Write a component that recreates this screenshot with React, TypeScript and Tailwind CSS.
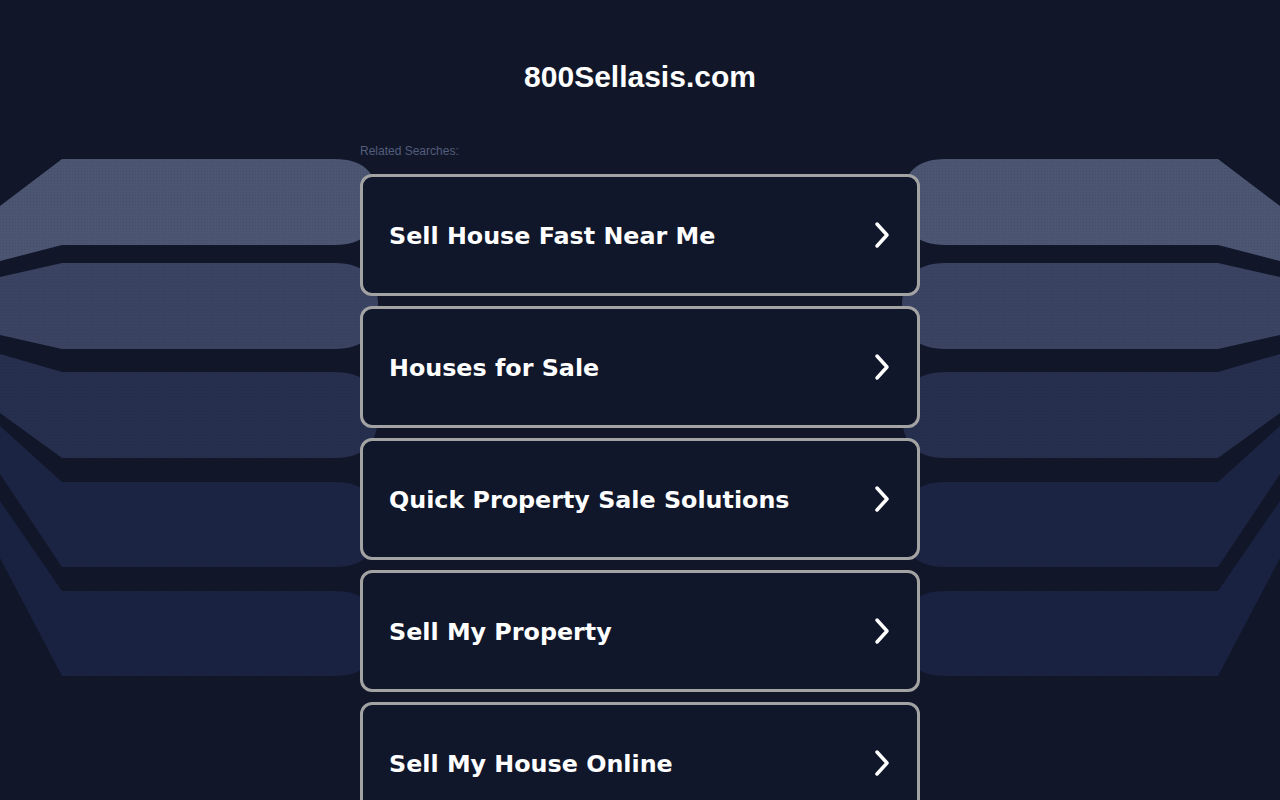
import React from 'react';

const SEARCHES = [
  'Sell House Fast Near Me',
  'Houses for Sale',
  'Quick Property Sale Solutions',
  'Sell My Property',
  'Sell My House Online',
];

// stacked ribbons on each side: top, bottom, left-edge top, left-edge bottom, fill
const RIBBONS = [
  { t: 159, b: 245, lt: 206, lb: 261, fill: '#4c5673' },
  { t: 263, b: 349, lt: 277, lb: 335, fill: '#3a4362' },
  { t: 372, b: 458, lt: 354, lb: 413, fill: '#262f4e' },
  { t: 482, b: 567, lt: 426, lb: 474, fill: '#1c2444' },
  { t: 591, b: 676, lt: 501, lb: 558, fill: '#1a2242' },
];

const ribbonPath = (r: (typeof RIBBONS)[number]) => {
  const mid = (r.t + r.b) / 2;
  return `M0,${r.lt} L62,${r.t} L335,${r.t} Q378,${r.t} 378,${mid} Q378,${r.b} 335,${r.b} L62,${r.b} L0,${r.lb} Z`;
};

const Backdrop = () => (
  <svg className="absolute inset-0 w-full h-full" viewBox="0 0 1280 800" preserveAspectRatio="none">
    <defs>
      <pattern id="dots" width="3" height="3" patternUnits="userSpaceOnUse">
        <rect width="1" height="1" fill="#0d1222" opacity="0.12" />
      </pattern>
    </defs>
    {RIBBONS.map((r, i) => (
      <g key={i}>
        <path d={ribbonPath(r)} fill={r.fill} />
        <path d={ribbonPath(r)} fill={r.fill} transform="translate(1280,0) scale(-1,1)" />
      </g>
    ))}
    <rect width="1280" height="800" fill="url(#dots)" />
  </svg>
);

const Chevron = () => (
  <svg width="18" height="30" viewBox="0 0 18 30" fill="none" className="-mt-[4px]">
    <path d="M4 4 L14 15 L4 26" stroke="#fff" strokeWidth="3.5" strokeLinecap="round" strokeLinejoin="round" />
  </svg>
);

export default function App() {
  return (
    <div className="relative min-h-screen h-[800px] overflow-hidden bg-[#111729]">
      <Backdrop />
      <div className="relative w-[560px] mx-auto">
        <h1
          className="mt-[60px] h-[34px] leading-[34px] text-center text-[30px] font-bold text-white"
          style={{ fontFamily: '"Liberation Sans", Arial, sans-serif' }}
        >
          800Sellasis.com
        </h1>
        <p
          className="mt-[50px] leading-[14px] text-[12px] text-[#535d7c]"
          style={{ fontFamily: '"Liberation Sans", Arial, sans-serif' }}
        >
          Related Searches:
        </p>
        <div className="mt-[16px] flex flex-col gap-[10px]">
          {SEARCHES.map(label => (
            <a
              key={label}
              href="#"
              className="h-[122px] flex items-center justify-between pt-[3px] pl-[26px] pr-[26px] rounded-[12px] border-[3px] border-[#a3a3a3] bg-[#10172b]"
            >
              <span
                className="text-[23.8px] font-bold text-white"
                style={{ fontFamily: '"DejaVu Sans", Verdana, sans-serif' }}
              >
                {label}
              </span>
              <Chevron />
            </a>
          ))}
        </div>
      </div>
    </div>
  );
}
